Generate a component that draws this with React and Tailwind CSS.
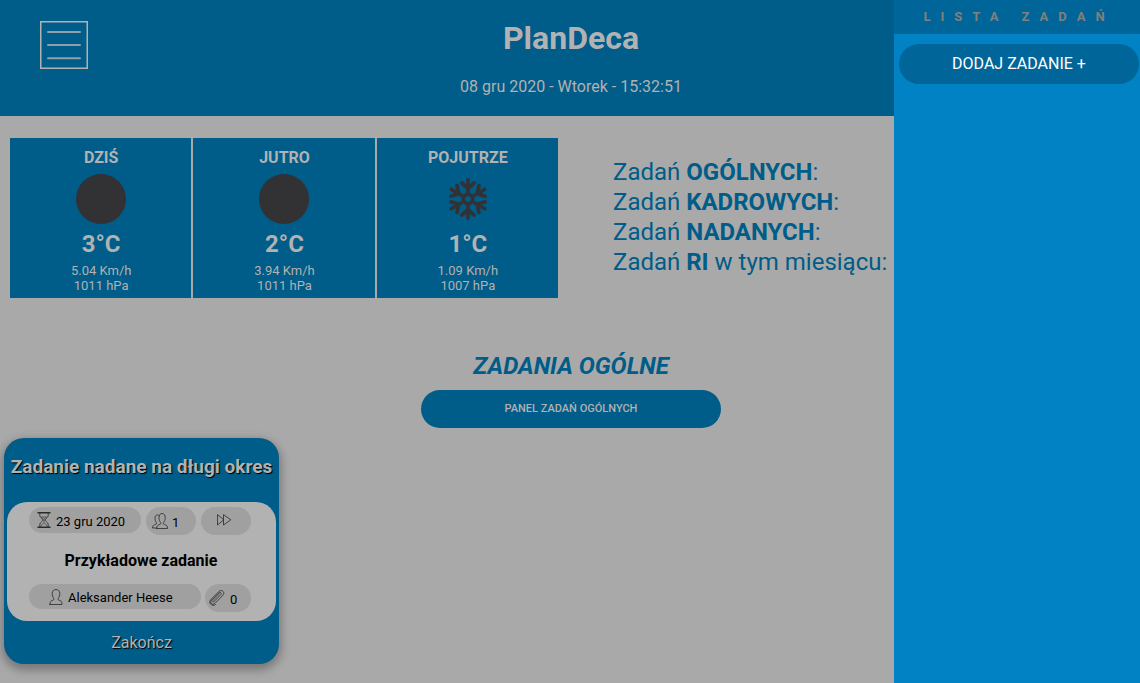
import React from "react";

const forecast = [
  { day: "DZIŚ", icon: "moon", temp: "3°C", wind: "5.04 Km/h", pressure: "1011 hPa" },
  { day: "JUTRO", icon: "moon", temp: "2°C", wind: "3.94 Km/h", pressure: "1011 hPa" },
  { day: "POJUTRZE", icon: "snow", temp: "1°C", wind: "1.09 Km/h", pressure: "1007 hPa" },
];

const counters = [
  { name: "OGÓLNYCH", rest: ":" },
  { name: "KADROWYCH", rest: ":" },
  { name: "NADANYCH", rest: ":" },
  { name: "RI", rest: " w tym miesiącu:" },
];

function MenuIcon() {
  return (
    <svg viewBox="0 0 48 48" className="size-12" fill="none" stroke="#b2b2b2" aria-hidden="true">
      <rect x="0.75" y="0.75" width="46.5" height="46.5" strokeWidth="1.5" />
      <path d="M8 11h32M8 24h32M8 37.200h32" strokeWidth="2" strokeOpacity="0.8" strokeLinecap="round" />
    </svg>
  );
}

function MoonIcon() {
  return (
    <svg viewBox="0 0 50 50" className="size-[50px]" aria-hidden="true">
      <circle cx="25" cy="25" r="25" fill="#323133" />
    </svg>
  );
}

function SnowIcon() {
  return (
    <svg viewBox="0 0 50 50" className="size-[50px]" fill="none" stroke="#323133" strokeWidth="3.6" strokeLinecap="round" aria-hidden="true">
      <circle cx="25" cy="25" r="4.600" />
      {[0, 60, 120, 180, 240, 300].map((angle) => (
        <path key={angle} d="M25 19V5.800M18.800 8.800L25 14.500L31.200 8.800" transform={`rotate(${angle} 25 25)`} />
      ))}
    </svg>
  );
}

function LineIcon({ children }) {
  return (
    <svg viewBox="0 0 16 16" className="size-4 shrink-0" fill="none" stroke="#2a2a2a" strokeWidth="0.8" strokeLinejoin="round" strokeLinecap="round" aria-hidden="true">
      {children}
    </svg>
  );
}

function HourglassIcon() {
  return (
    <LineIcon>
      <path d="M2 .7h12M2 15.3h12" strokeWidth="1.4" />
      <path d="M3.8 1v2.800c0 1.900 3.200 2.900 3.200 4.200s-3.200 2.300-3.200 4.200V15M12.200 1v2.800c0 1.900-3.200 2.900-3.200 4.200s3.200 2.300 3.200 4.200V15" />
      <path d="M5.500 5h5L8 7zM8 8v2M5 14c.3-1.500 2-2.500 3-3.200 1 .7 2.700 1.700 3 3.200" strokeWidth="0.6" />
    </LineIcon>
  );
}

function PeopleIcon() {
  return (
    <LineIcon>
      <path d="M4.700 15.500h10.800c0-2.500-.6-3.300-3.800-4.400-.5-.3-.4-1.300 0-1.800 1-1.200 1.500-2.500 1.500-4.500 0-2.800-1.200-4.300-3.100-4.300S7 2 7 4.800c0 2 .5 3.300 1.500 4.500.4.500.5 1.500 0 1.800-3.200 1.100-3.800 1.900-3.800 4.400z" />
      <path d="M7 2.500C6.500 2 6 1.900 5.500 1.900 3.900 1.900 3 3.200 3 5.500c0 1.800.5 2.900 1.300 3.900.3.500.3 1.300-.1 1.600C1.300 12 .5 12.900.5 15h4.200" />
    </LineIcon>
  );
}

function PersonIcon() {
  return (
    <LineIcon>
      <path d="M2 15.500h12c0-3-.7-3.700-3.200-4.400-.9-.3-.9-1.300-.4-2 .8-1.200 1.400-2.500 1.400-4.500C11.800 2 10.200.5 8 .5S4.200 2 4.200 4.600c0 2 .6 3.300 1.400 4.500.5.700.5 1.700-.4 2-2.500.7-3.200 1.400-3.200 4.400z" />
    </LineIcon>
  );
}

function ForwardIcon() {
  return (
    <LineIcon>
      <path d="M1.500 3v10L7.500 8zM7.500 3v10l7-5z" />
    </LineIcon>
  );
}

function ClipIcon() {
  return (
    <LineIcon>
      <path d="M4.800 11.800l7-7.200c1.300-1.300-.6-3-1.900-1.700L2.600 10.200c-2.500 2.500 1 5.500 3.200 3.300l8.100-8.200C16.600 2.500 12.800-1.300 9.900 1.500L2.100 9.300c-3.300 3.300.6 7.800 4.300 5.400" />
      <path d="M10.600 3.700l-6.800 7c-.8.900.3 1.900 1 1.100" strokeWidth="0.600" />
    </LineIcon>
  );
}

function Pill({ className, children }) {
  return (
    <span className={"flex items-center justify-start rounded-full bg-[#a0a0a0] text-[13px] leading-[15px] text-black " + className}>
      {children}
    </span>
  );
}

function WeatherCard({ item }) {
  return (
    <section className="flex h-40 flex-col items-center bg-[#005c88] pt-2.5 pl-px">
      <h2 className="text-base leading-[19px] font-bold">{item.day}</h2>
      <div className="mt-[7px]">{item.icon === "moon" ? <MoonIcon /> : <SnowIcon />}</div>
      <p className="mt-1 text-2xl leading-8 font-bold">{item.temp}</p>
      <p className="mt-[3px] text-[13px] leading-[15px]">{item.wind}</p>
      <p className="text-[13px] leading-[15px]">{item.pressure}</p>
    </section>
  );
}

function TaskCard() {
  return (
    <article className="ml-1 flex w-[275px] flex-col rounded-[20px] bg-[#005c88] px-[3px] text-center shadow-[0_4px_10px_2px_rgba(0,0,0,0.3)]">
      <h3 className="flex h-16 items-center justify-center pb-1.5 text-[19px] font-bold whitespace-nowrap text-[#b2b2b2] [text-shadow:1px_1px_1px_black]">
        Zadanie nadane na długi okres
      </h3>
      <div className="flex h-[119px] flex-col rounded-[20px] bg-[#b2b2b2] pt-[5px] pr-[25px] pl-[22px]">
        <div className="flex items-start gap-[5px]">
          <Pill className="h-[26px] w-28 gap-1 pl-[7px]"><HourglassIcon /><span className="pt-0.5">23 gru 2020</span></Pill>
          <Pill className="h-7 w-[50px] gap-1 pl-1.5"><PeopleIcon /><span className="pt-0.5">1</span></Pill>
          <button type="button" aria-label="Przekaż dalej" className="flex h-7 w-[50px] items-center rounded-full bg-[#a0a0a0] pb-[3px] pl-[15px]">
            <ForwardIcon />
          </button>
        </div>
        <h4 className="mt-4 pl-0.5 text-base leading-5 font-bold text-black">Przykładowe zadanie</h4>
        <div className="mt-[13px] flex items-start gap-1">
          <Pill className="h-[25px] w-[172px] gap-1 pl-[19px]"><PersonIcon /><span className="pt-0.5">Aleksander Heese</span></Pill>
          <Pill className="h-7 w-[46px] gap-[5px] pl-1"><ClipIcon /><span className="pt-0.5">0</span></Pill>
        </div>
      </div>
      <button type="button" className="h-[43px] text-base text-[#b2b2b2] [text-shadow:1px_1px_1px_black]">Zakończ</button>
    </article>
  );
}

export default function App() {
  return (
    <div className="relative min-h-screen overflow-hidden bg-[#a9a9a9] font-[Roboto,sans-serif] text-[#b2b2b2]">
      <header className="grid h-[116px] grid-cols-[1fr_auto_1fr] bg-[#005c88] pl-0.5">
        <button type="button" aria-label="Menu" className="mt-[21px] ml-[38px] size-12">
          <MenuIcon />
        </button>
        <div className="pt-[18px] text-center">
          <h1 className="text-[32px] leading-10 font-bold">PlanDeca</h1>
          <p className="mt-[19px] text-base leading-5">08 gru 2020 - Wtorek - 15:32:51</p>
        </div>
      </header>

      <main>
        <div className="mt-[22px] grid grid-cols-2 items-center">
          <div className="grid grid-cols-3 gap-0.5 pr-3 pl-2.5">
            {forecast.map((item) => (
              <WeatherCard key={item.day} item={item} />
            ))}
          </div>
          <ul className="pb-0.5 pl-[43px] text-2xl leading-[30px] whitespace-nowrap text-[#005c88]">
            {counters.map((item) => (
              <li key={item.name}>
                Zadań <strong className="font-bold">{item.name}</strong>{item.rest}
              </li>
            ))}
          </ul>
        </div>

        <section className="mt-[53px] flex flex-col items-center pl-0.5">
          <h2 className="text-2xl leading-[30px] font-bold text-[#005c88] italic">ZADANIA OGÓLNE</h2>
          <button type="button" className="mt-[9px] h-[38px] w-[300px] rounded-full bg-[#005c88] text-[11px] font-medium">
            PANEL ZADAŃ OGÓLNYCH
          </button>
        </section>

        <div className="mt-2.5 pb-[19px]">
          <TaskCard />
        </div>
      </main>

      <aside className="absolute inset-y-0 right-0 w-[246px] bg-[#0082c4]">
        <h2 className="flex h-[34px] items-center justify-center bg-[#006699] pl-1 text-[13px] font-bold tracking-[10px] whitespace-nowrap text-[#808080]">
          LISTA ZADAŃ
        </h2>
        <div className="pt-2.5 pr-px pl-[5px]">
          <button type="button" className="h-10 w-full rounded-full bg-[#006699] text-base text-white">
            DODAJ ZADANIE +
          </button>
        </div>
      </aside>
    </div>
  );
}
